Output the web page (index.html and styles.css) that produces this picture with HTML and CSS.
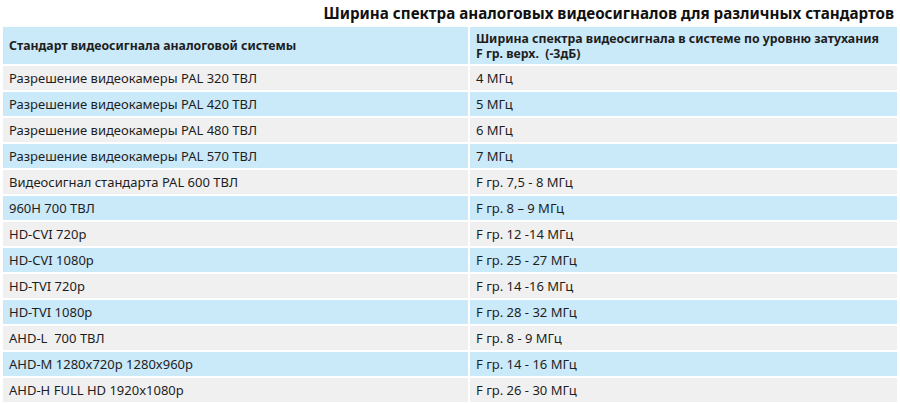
FILE: index.html
```html
<!DOCTYPE html>
<html lang="ru">
<head>
<meta charset="utf-8">
<link rel="stylesheet" href="styles.css">
</head>
<body>
<div class="page">
  <h1 class="title">Ширина спектра аналоговых видеосигналов для различных стандартов</h1>
  <table class="spec">
    <thead>
      <tr class="blue">
        <th class="c1">Стандарт видеосигнала аналоговой системы</th>
        <th class="c2"><span class="hl">Ширина спектра видеосигнала в системе по уровню затухания</span><span class="hl">F гр. верх.&nbsp; (-3дБ)</span></th>
      </tr>
    </thead>
    <tbody>
      <tr class="gray"><td>Разрешение видеокамеры PAL 320 ТВЛ</td><td>4 МГц</td></tr>
      <tr class="blue"><td>Разрешение видеокамеры PAL 420 ТВЛ</td><td>5 МГц</td></tr>
      <tr class="gray"><td>Разрешение видеокамеры PAL 480 ТВЛ</td><td>6 МГц</td></tr>
      <tr class="blue"><td>Разрешение видеокамеры PAL 570 ТВЛ</td><td>7 МГц</td></tr>
      <tr class="gray"><td>Видеосигнал стандарта PAL 600 ТВЛ</td><td>F гр. 7,5 - 8 МГц</td></tr>
      <tr class="blue"><td>960Н 700 ТВЛ</td><td>F гр. 8 – 9 МГц</td></tr>
      <tr class="gray"><td>HD-CVI 720p</td><td>F гр. 12 -14 МГц</td></tr>
      <tr class="blue"><td>HD-CVI 1080p</td><td>F гр. 25 - 27 МГц</td></tr>
      <tr class="gray"><td>HD-TVI 720p</td><td>F гр. 14 -16 МГц</td></tr>
      <tr class="blue"><td>HD-TVI 1080p</td><td>F гр. 28 - 32 МГц</td></tr>
      <tr class="gray"><td>AHD-L&nbsp; 700 ТВЛ</td><td>F гр. 8 - 9 МГц</td></tr>
      <tr class="blue"><td>AHD-M 1280x720p 1280x960p</td><td>F гр. 14 - 16 МГц</td></tr>
      <tr class="gray"><td>AHD-H FULL HD 1920x1080p</td><td>F гр. 26 - 30 МГц</td></tr>
    </tbody>
  </table>
</div>
</body>
</html>
```

FILE: styles.css
```css
html, body {
  margin: 0;
  padding: 0;
  background: #ffffff;
}
.page {
  width: 900px;
  padding: 0 1px;
  box-sizing: border-box;
  font-family: "Noto Sans", "Open Sans", sans-serif;
  color: #1e1e1e;
}
.title {
  margin: 0;
  padding: 3px 5px 0 0;
  height: 25px;
  box-sizing: border-box;
  text-align: right;
  font-size: 15.2px;
  line-height: 20px;
  font-weight: bold;
  color: #111;
}
.spec {
  width: 100%;
  border-collapse: separate;
  border-spacing: 2px;
  font-size: 13px;
}
.spec th, .spec td {
  text-align: left;
  vertical-align: middle;
  padding: 0 6px;
  height: 24px;
  line-height: 16px;
}
.spec th {
  height: 37px;
  font-weight: bold;
  font-size: 12.3px;
  line-height: 15px;
}
.hl {
  display: block;
  line-height: 15px;
}
.spec .c1 { width: 453px; }
.blue th, .blue td { background: #cae9f9; }
.gray td { background: #f0f0f0; }
```
